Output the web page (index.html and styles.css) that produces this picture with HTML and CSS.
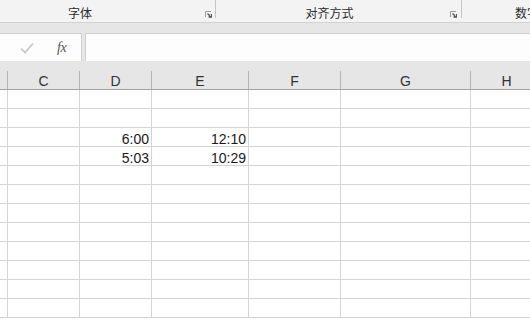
FILE: index.html
```html
<!DOCTYPE html>
<html lang="zh-CN">
<head>
  <meta charset="UTF-8" />
  <title>工作表</title>
  <link rel="stylesheet" href="styles.css">
</head>
<body>
  <!-- Лента: группы -->
  <div class="ribbon">
    <div class="group group-font">
      <span class="group-label">字体</span>
      <svg class="launcher" viewBox="0 0 7 7"><path d="M0.5 6V0.5H6" fill="none" stroke="#9a9a9a" /><path d="M2.5 2.5L6 6M3.5 6H6.5V3" fill="none" stroke="#555" stroke-width="1.4" /></svg>
    </div>
    <div class="group group-align">
      <span class="group-label">对齐方式</span>
      <svg class="launcher" viewBox="0 0 7 7"><path d="M0.5 6V0.5H6" fill="none" stroke="#9a9a9a" /><path d="M2.5 2.5L6 6M3.5 6H6.5V3" fill="none" stroke="#555" stroke-width="1.4" /></svg>
    </div>
    <div class="group group-number">
      <span class="group-label">数字</span>
    </div>
  </div>

  <!-- Строка формул -->
  <div class="formula-bar">
    <div class="fx-box">
      <svg class="check" viewBox="0 0 14 12"><path d="M1 6.5L5 10.5L13 1.5" fill="none" stroke="#c4c4c4" stroke-width="1.6" /></svg>
      <span class="fx">fx</span>
    </div>
    <div class="formula-input"></div>
  </div>

  <!-- Сетка -->
  <div class="sheet">
    <div class="row head">
      <div class="cell c-b"><span></span></div>
      <div class="cell c-c"><span>C</span></div>
      <div class="cell c-d"><span>D</span></div>
      <div class="cell c-e"><span>E</span></div>
      <div class="cell c-f"><span>F</span></div>
      <div class="cell c-g"><span>G</span></div>
      <div class="cell c-h"><span>H</span></div>
    </div>
    <div class="row"><div class="cell c-b"></div><div class="cell c-c"></div><div class="cell c-d"></div><div class="cell c-e"></div><div class="cell c-f"></div><div class="cell c-g"></div><div class="cell c-h"></div></div>
    <div class="row"><div class="cell c-b"></div><div class="cell c-c"></div><div class="cell c-d"></div><div class="cell c-e"></div><div class="cell c-f"></div><div class="cell c-g"></div><div class="cell c-h"></div></div>
    <div class="row"><div class="cell c-b"></div><div class="cell c-c"></div><div class="cell c-d">6:00</div><div class="cell c-e">12:10</div><div class="cell c-f"></div><div class="cell c-g"></div><div class="cell c-h"></div></div>
    <div class="row"><div class="cell c-b"></div><div class="cell c-c"></div><div class="cell c-d">5:03</div><div class="cell c-e">10:29</div><div class="cell c-f"></div><div class="cell c-g"></div><div class="cell c-h"></div></div>
    <div class="row"><div class="cell c-b"></div><div class="cell c-c"></div><div class="cell c-d"></div><div class="cell c-e"></div><div class="cell c-f"></div><div class="cell c-g"></div><div class="cell c-h"></div></div>
    <div class="row"><div class="cell c-b"></div><div class="cell c-c"></div><div class="cell c-d"></div><div class="cell c-e"></div><div class="cell c-f"></div><div class="cell c-g"></div><div class="cell c-h"></div></div>
    <div class="row"><div class="cell c-b"></div><div class="cell c-c"></div><div class="cell c-d"></div><div class="cell c-e"></div><div class="cell c-f"></div><div class="cell c-g"></div><div class="cell c-h"></div></div>
    <div class="row"><div class="cell c-b"></div><div class="cell c-c"></div><div class="cell c-d"></div><div class="cell c-e"></div><div class="cell c-f"></div><div class="cell c-g"></div><div class="cell c-h"></div></div>
    <div class="row"><div class="cell c-b"></div><div class="cell c-c"></div><div class="cell c-d"></div><div class="cell c-e"></div><div class="cell c-f"></div><div class="cell c-g"></div><div class="cell c-h"></div></div>
    <div class="row"><div class="cell c-b"></div><div class="cell c-c"></div><div class="cell c-d"></div><div class="cell c-e"></div><div class="cell c-f"></div><div class="cell c-g"></div><div class="cell c-h"></div></div>
    <div class="row"><div class="cell c-b"></div><div class="cell c-c"></div><div class="cell c-d"></div><div class="cell c-e"></div><div class="cell c-f"></div><div class="cell c-g"></div><div class="cell c-h"></div></div>
    <div class="row"><div class="cell c-b"></div><div class="cell c-c"></div><div class="cell c-d"></div><div class="cell c-e"></div><div class="cell c-f"></div><div class="cell c-g"></div><div class="cell c-h"></div></div>
  </div>
</body>
</html>
```

FILE: styles.css
```css
* {
  box-sizing: border-box;
}
body {
  margin: 0;
  width: 530px;
  height: 320px;
  overflow: hidden;
  background: #fff;
  font-family: 'Liberation Sans', 'Noto Sans CJK SC', sans-serif;
  color: #222;
}
/* Лента */
.ribbon {
  display: flex;
  height: 23px;
  background: #f3f3f3;
  border-bottom: 1px solid #d2d2d2;
  overflow: hidden;
}
.group {
  display: flex;
  align-items: flex-start;
  height: 18px;
  border-right: 1px solid #c6c6c6;
  flex-shrink: 0;
}
.group-label {
  font-family: 'Noto Sans CJK SC', sans-serif;
  font-size: 12px;
  line-height: 14px;
  padding-top: 6px;
  color: #2b2b2b;
  text-align: center;
  flex-shrink: 0;
}
.launcher {
  width: 7px;
  height: 7px;
  margin-top: 11px;
  flex-shrink: 0;
}
.group-font {
  width: 273px;
  margin-left: -57px;
}
.group-font .group-label {
  width: 262px;
  padding-left: 12px;
}
.group-align {
  width: 246px;
}
.group-align .group-label {
  width: 234px;
  padding-right: 7px;
}
.group-number {
  border-right: none;
  padding-left: 53px;
}
/* Строка формул */
.formula-bar {
  display: flex;
  height: 38px;
  background: #e6e6e6;
  padding-top: 10px;
}
.fx-box {
  width: 82px;
  display: flex;
  align-items: center;
  background: #fdfdfd;
  border: 1px solid #cfcfcf;
  border-left: none;
  border-bottom: none;
}
.check {
  width: 14px;
  height: 12px;
  margin-left: 20px;
  margin-top: 1px;
}
.fx {
  font-family: 'Liberation Serif', serif;
  font-style: italic;
  font-size: 14px;
  color: #555;
  margin-left: 23px;
  letter-spacing: -0.5px;
}
.formula-input {
  flex: 1;
  margin-left: 3px;
  background: #fdfdfd;
  border: 1px solid #cfcfcf;
  border-right: none;
  border-bottom: none;
}
/* Сетка */
.sheet {
  width: 530px;
  overflow: hidden;
}
.row {
  display: flex;
  height: 19px;
  border-bottom: 1px solid #d4d4d4;
}
.cell {
  height: 18px;
  border-right: 1px solid #d4d4d4;
  font-size: 14px;
  line-height: 16px;
  padding: 3px 2px 0 0;
  text-align: right;
  flex-shrink: 0;
  color: #1a1a1a;
}
.c-b { width: 8px; }
.c-c { width: 72px; }
.c-d { width: 72px; }
.c-e { width: 97px; }
.c-f { width: 92px; }
.c-g { width: 130px; }
.c-h { width: 72px; }
.row.head {
  height: 29px;
  background: #e6e6e6;
  border-bottom: 1px solid #a3a3a3;
}
.head .cell {
  height: 28px;
  border-right: none;
  padding: 10px 0 0;
}
.head .cell span {
  display: block;
  height: 18px;
  border-right: 1px solid #b4b4b4;
  padding-top: 3px;
  line-height: 15px;
  text-align: center;
  color: #333;
}
```
